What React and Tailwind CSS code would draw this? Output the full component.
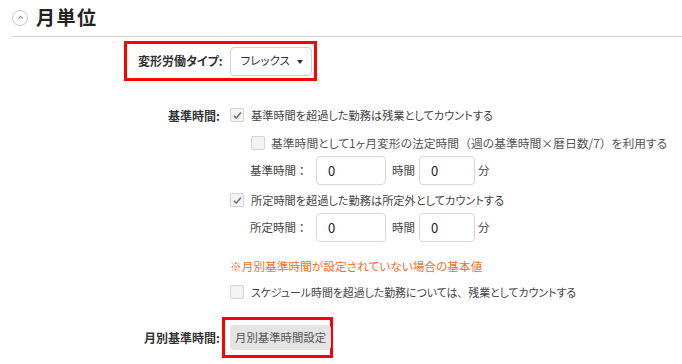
const font = "font-['Meiryo','Noto_Sans_CJK_JP',sans-serif] [font-feature-settings:'palt']"

// full-width punctuation keeps its full width, kana stay proportional
function P({ children }) {
  return <span className="[font-feature-settings:normal]">{children}</span>
}

function CheckBox({ checked }) {
  return (
    <span className="flex h-[14px] w-[14px] shrink-0 items-center justify-center rounded-[2px] border border-[#d4d4d4] bg-[#f3f3f3]">
      {checked && (
        <svg viewBox="0 0 12 12" className="h-[11px] w-[11px]">
          <path d="M2.2 6.4 L4.6 8.8 L9.8 2.8" fill="none" stroke="#777" strokeWidth="1.8" />
        </svg>
      )}
    </span>
  )
}

function TimeInputs({ label }) {
  return (
    <div className="flex items-center text-[11.5px] text-[#444]">
      <span className="w-[66px]">{label}<P>：</P></span>
      <div className="flex h-[29px] w-[70px] items-center rounded-[4px] border border-[#d8d8d8] px-[11px] text-[13px] text-[#222]">0</div>
      <span className="ml-[6px] mr-[4px]">時間</span>
      <div className="flex h-[29px] w-[56px] items-center rounded-[4px] border border-[#d8d8d8] px-[11px] text-[13px] text-[#222]">0</div>
      <span className="ml-[3px]">分</span>
    </div>
  )
}

export default function App() {
  return (
    <div className={`h-[364px] w-[682px] overflow-hidden bg-white text-[#333] ${font}`}>
      {/* Section header */}
      <div className="ml-[12px] flex h-[37px] items-center border-b border-[#d0d0d0] pb-[1px]">
        <span className="flex h-[16px] w-[16px] items-center justify-center rounded-full border border-[#c8c8c8]">
          <svg viewBox="0 0 10 10" className="h-[9px] w-[9px]">
            <path d="M2.5 6.2 L5 3.7 L7.5 6.2" fill="none" stroke="#999" strokeWidth="1.4" />
          </svg>
        </span>
        <h2 className="ml-[8px] text-[19px] font-bold tracking-[1.5px] text-[#222]">月単位</h2>
      </div>

      {/* Flex type */}
      <div className="ml-[124px] mt-[4px] flex h-[40px] w-[193px] items-center border-[3px] border-[#ff0000] pl-[11px]">
        <span className="text-[12px] font-bold text-[#333]">変形労働タイプ:</span>
        <div className="ml-[7px] flex h-[29px] w-[82px] items-center justify-between rounded-[4px] border border-[#d0d0d0] pl-[10px] pr-[8px] text-[11.5px] text-[#333]">
          <span>フレックス</span>
          <span className="mt-[1px] h-0 w-0 border-x-[3.5px] border-t-[4px] border-x-transparent border-t-[#333]" />
        </div>
      </div>

      {/* Standard time */}
      <div className="mt-[25px] flex">
        <div className="w-[222px] pr-[2px] pt-[1px] text-right text-[12px] font-bold text-[#333]">基準時間:</div>
        <div className="ml-[8px] flex flex-col text-[11.5px] text-[#444]">
          <div className="flex h-[18px] items-center gap-[7px] text-[11.2px]">
            <CheckBox checked />
            <span>基準時間を超過した勤務は残業としてカウントする</span>
          </div>
          <div className="ml-[21px] mt-[10px] flex h-[18px] items-center gap-[6px] text-[11.8px] text-[#555]">
            <CheckBox />
            <span>基準時間として1ヶ月変形の法定時間<P>（</P>週の基準時間×暦日数/7<P>）</P>を利用する</span>
          </div>
          <div className="ml-[20px] mt-[4px]">
            <TimeInputs label="基準時間" />
          </div>
          <div className="mt-[6px] flex h-[18px] items-center gap-[7px] text-[11.2px]">
            <CheckBox checked />
            <span>所定時間を超過した勤務は所定外としてカウントする</span>
          </div>
          <div className="ml-[20px] mt-[4px]">
            <TimeInputs label="所定時間" />
          </div>
          <div className="mt-[15px] h-[18px] text-[11.7px] text-[#f4702a]">※月別基準時間が設定されていない場合の基本値</div>
          <div className="mt-[8px] flex h-[18px] items-center gap-[7px] text-[10.9px]">
            <CheckBox />
            <span>スケジュール時間を超過した勤務については<P>、</P>残業としてカウントする</span>
          </div>
        </div>
      </div>

      {/* Monthly standard time */}
      <div className="mt-[16px] flex items-center">
        <div className="w-[222px] pr-[2px] text-right text-[12px] font-bold text-[#333]">月別基準時間:</div>
        <div className="flex h-[41px] w-[111px] items-center border-[3px] border-[#ff0000] pl-[5px]">
          <button className="h-[25px] whitespace-nowrap rounded-[4px] bg-[#e4e4e4] px-[5px] text-[11.4px] text-[#555]">月別基準時間設定</button>
        </div>
      </div>
    </div>
  )
}
